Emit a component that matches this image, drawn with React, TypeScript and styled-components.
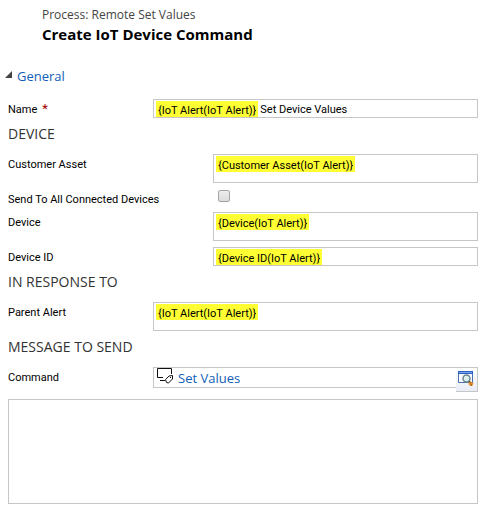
import React from 'react';
import styled, { createGlobalStyle } from 'styled-components';

const GlobalStyle = createGlobalStyle`
  * { box-sizing: border-box; }
  body {
    margin: 0;
    background: #fff;
    color: #000;
    font: 11px/19px Roboto, "Open Sans", sans-serif;
  }
  input, textarea, button { font: inherit; color: inherit; }
`;

const headingFont = '"Open Sans", "Noto Sans", sans-serif';

const Page = styled.main`
  padding: 6px 9px 9px 8px;
`;

const Header = styled.header`
  padding-left: 34px;
  font-family: ${headingFont};
`;

const Process = styled.p`
  margin: 0;
  font-size: 12px;
  line-height: 18px;
  color: #444;
`;

const Title = styled.h1`
  margin: 0;
  font-size: 15px;
  line-height: 20px;
  font-weight: 700;
`;

const SectionToggle = styled.button`
  && { font-family: ${headingFont}; }
  display: flex;
  align-items: center;
  gap: 5px;
  margin: 22px 0 13px -3px;
  padding: 0;
  border: 0;
  background: none;
  color: #1160b7;
  font-size: 13px;
  line-height: 20px;
  svg { margin-bottom: 4px; }
`;

const GroupTitle = styled.h2`
  margin: 0 0 4px;
  font-family: ${headingFont};
  font-size: 14px;
  line-height: 32px;
  font-weight: 400;
  color: #333;
`;

const Row = styled.div<{ $wide?: boolean }>`
  display: grid;
  grid-template-columns: ${(p) => (p.$wide ? 205 : 145)}px minmax(0, 1fr);
  grid-template-rows: minmax(19px, max-content);
  align-items: start;
  & + & { margin-top: 6px; }
`;

const Label = styled.label`
  margin-bottom: -2px;
  line-height: 21px;
`;

const CheckRow = styled(Row)`
  && { margin: 6px 0 4px; }
  && + ${Row} { margin-top: 0; }
`;

const Required = styled.span`
  margin-left: 5px;
  font-size: 13px;
  line-height: 1;
  color: #a00000;
`;

const Field = styled.div<{ $tall?: boolean }>`
  display: flex;
  align-items: flex-start;
  height: ${(p) => (p.$tall ? 29 : 19)}px;
  padding: 1px 2px 0;
  border: 1px solid #c6c6c6;
`;

const Token = styled.input`
  field-sizing: content;
  height: 16px;
  padding: 2px 2px 0;
  border: 0;
  background: #ffff33;
  line-height: 14px;
`;

const NameText = styled.input`
  flex: 1;
  min-width: 0;
  height: 15px;
  padding: 1px 2px 0;
  border: 0;
  background: none;
  line-height: 14px;
`;

const Checkbox = styled.input`
  appearance: none;
  width: 12px;
  height: 12px;
  margin: 1px 0 0 5px;
  border: 1px solid #a6a6a6;
  border-radius: 2px;
  background: linear-gradient(#ececec, #dcdcdc);
  &:checked { background: #1160b7; }
`;

const Lookup = styled.div`
  display: flex;
  align-items: flex-start;
  height: 25px;
`;

const LookupValue = styled.div`
  display: flex;
  flex: 1;
  gap: 4px;
  height: 21px;
  padding-left: 3px;
  border: 1px solid #c6c6c6;
  border-right: 0;
`;

const LookupLink = styled.a`
  color: #1160b7;
  font-family: ${headingFont};
  font-size: 13px;
  line-height: 20px;
  text-decoration: none;
`;

const LookupButton = styled.button`
  width: 22px;
  height: 25px;
  padding: 0 0 3px 1px;
  border: 1px solid #c6c6c6;
  border-left: 0;
  background: linear-gradient(#fff, #e9ecf5);
  svg { display: block; }
`;

const Message = styled.textarea`
  display: block;
  width: 100%;
  height: 105px;
  margin-top: 7px;
  border: 1px solid #c6c6c6;
  resize: none;
`;

const Triangle = () => (
  <svg width="7" height="7" viewBox="0 0 7 7" aria-hidden="true">
    <path d="M7 0V7H0Z" fill="#444" />
  </svg>
);

const CommandIcon = () => (
  <svg width="17" height="17" viewBox="0 0 17 17" fill="none" stroke="#111" aria-hidden="true">
    <path d="M6 9.500H.5V.5H14.500V6M3 12.500H8" />
    <path d="M8.500 11.500L12 8L15.500 7.500V11L11.500 15L9.500 14.500Z" fill="#fff" />
    <path d="M13 9.500h1" />
  </svg>
);

const FindIcon = () => (
  <svg width="17" height="17" viewBox="0 0 17 17" aria-hidden="true">
    <path d="M1.500 1.500H15.500V12.500H1.500Z" fill="#f7faff" stroke="#4a6fae" />
    <path d="M1 1H16V4H1Z" fill="#2d62c4" />
    <path d="M2 2.500H15" stroke="#75a2ef" />
    <circle cx="9.500" cy="8.500" r="3.500" fill="#d7f0ef" stroke="#71878e" strokeWidth="1.500" />
    <path d="M8 8Q8 7 9.500 7" stroke="#fff" fill="none" />
    <path d="M12 12L13 11L16.500 13.500L15 16H13L11.500 14Z" fill="#e78b24" />
    <path d="M12 11L13.500 12.500M14 15H15" stroke="#5b4637" />
  </svg>
);

type TokenRowProps = { id: string; label: string; value: string; wide?: boolean; tall?: boolean };

const TokenRow = ({ id, label, value, wide, tall }: TokenRowProps) => (
  <Row $wide={wide}>
    <Label htmlFor={id}>{label}</Label>
    <Field $tall={tall}>
      <Token id={id} readOnly value={value} />
    </Field>
  </Row>
);

export default function App() {
  return (
    <>
      <GlobalStyle />
      <Page>
        <Header>
          <Process>Process: Remote Set Values</Process>
          <Title>Create IoT Device Command</Title>
        </Header>
        <SectionToggle type="button" aria-expanded="true">
          <Triangle />
          General
        </SectionToggle>
        <Row>
          <Label htmlFor="name">
            Name<Required>*</Required>
          </Label>
          <Field>
            <Token readOnly aria-label="Name prefix" value="{IoT Alert(IoT Alert)}" />
            <NameText id="name" defaultValue="Set Device Values" />
          </Field>
        </Row>

        <GroupTitle>DEVICE</GroupTitle>
        <TokenRow id="asset" label="Customer Asset" value="{Customer Asset(IoT Alert)}" wide tall />
        <CheckRow $wide>
          <Label htmlFor="all">Send To All Connected Devices</Label>
          <Checkbox id="all" type="checkbox" />
        </CheckRow>
        <TokenRow id="device" label="Device" value="{Device(IoT Alert)}" wide tall />
        <TokenRow id="device-id" label="Device ID" value="{Device ID(IoT Alert)}" wide />

        <GroupTitle>IN RESPONSE TO</GroupTitle>
        <TokenRow id="parent" label="Parent Alert" value="{IoT Alert(IoT Alert)}" tall />

        <GroupTitle>MESSAGE TO SEND</GroupTitle>
        <Row>
          <Label as="span" id="command-label">Command</Label>
          <Lookup role="group" aria-labelledby="command-label">
            <LookupValue>
              <CommandIcon />
              <LookupLink href="#set-values">Set Values</LookupLink>
            </LookupValue>
            <LookupButton type="button" aria-label="Look up command">
              <FindIcon />
            </LookupButton>
          </Lookup>
        </Row>
        <Message aria-label="Message" />
      </Page>
    </>
  );
}
